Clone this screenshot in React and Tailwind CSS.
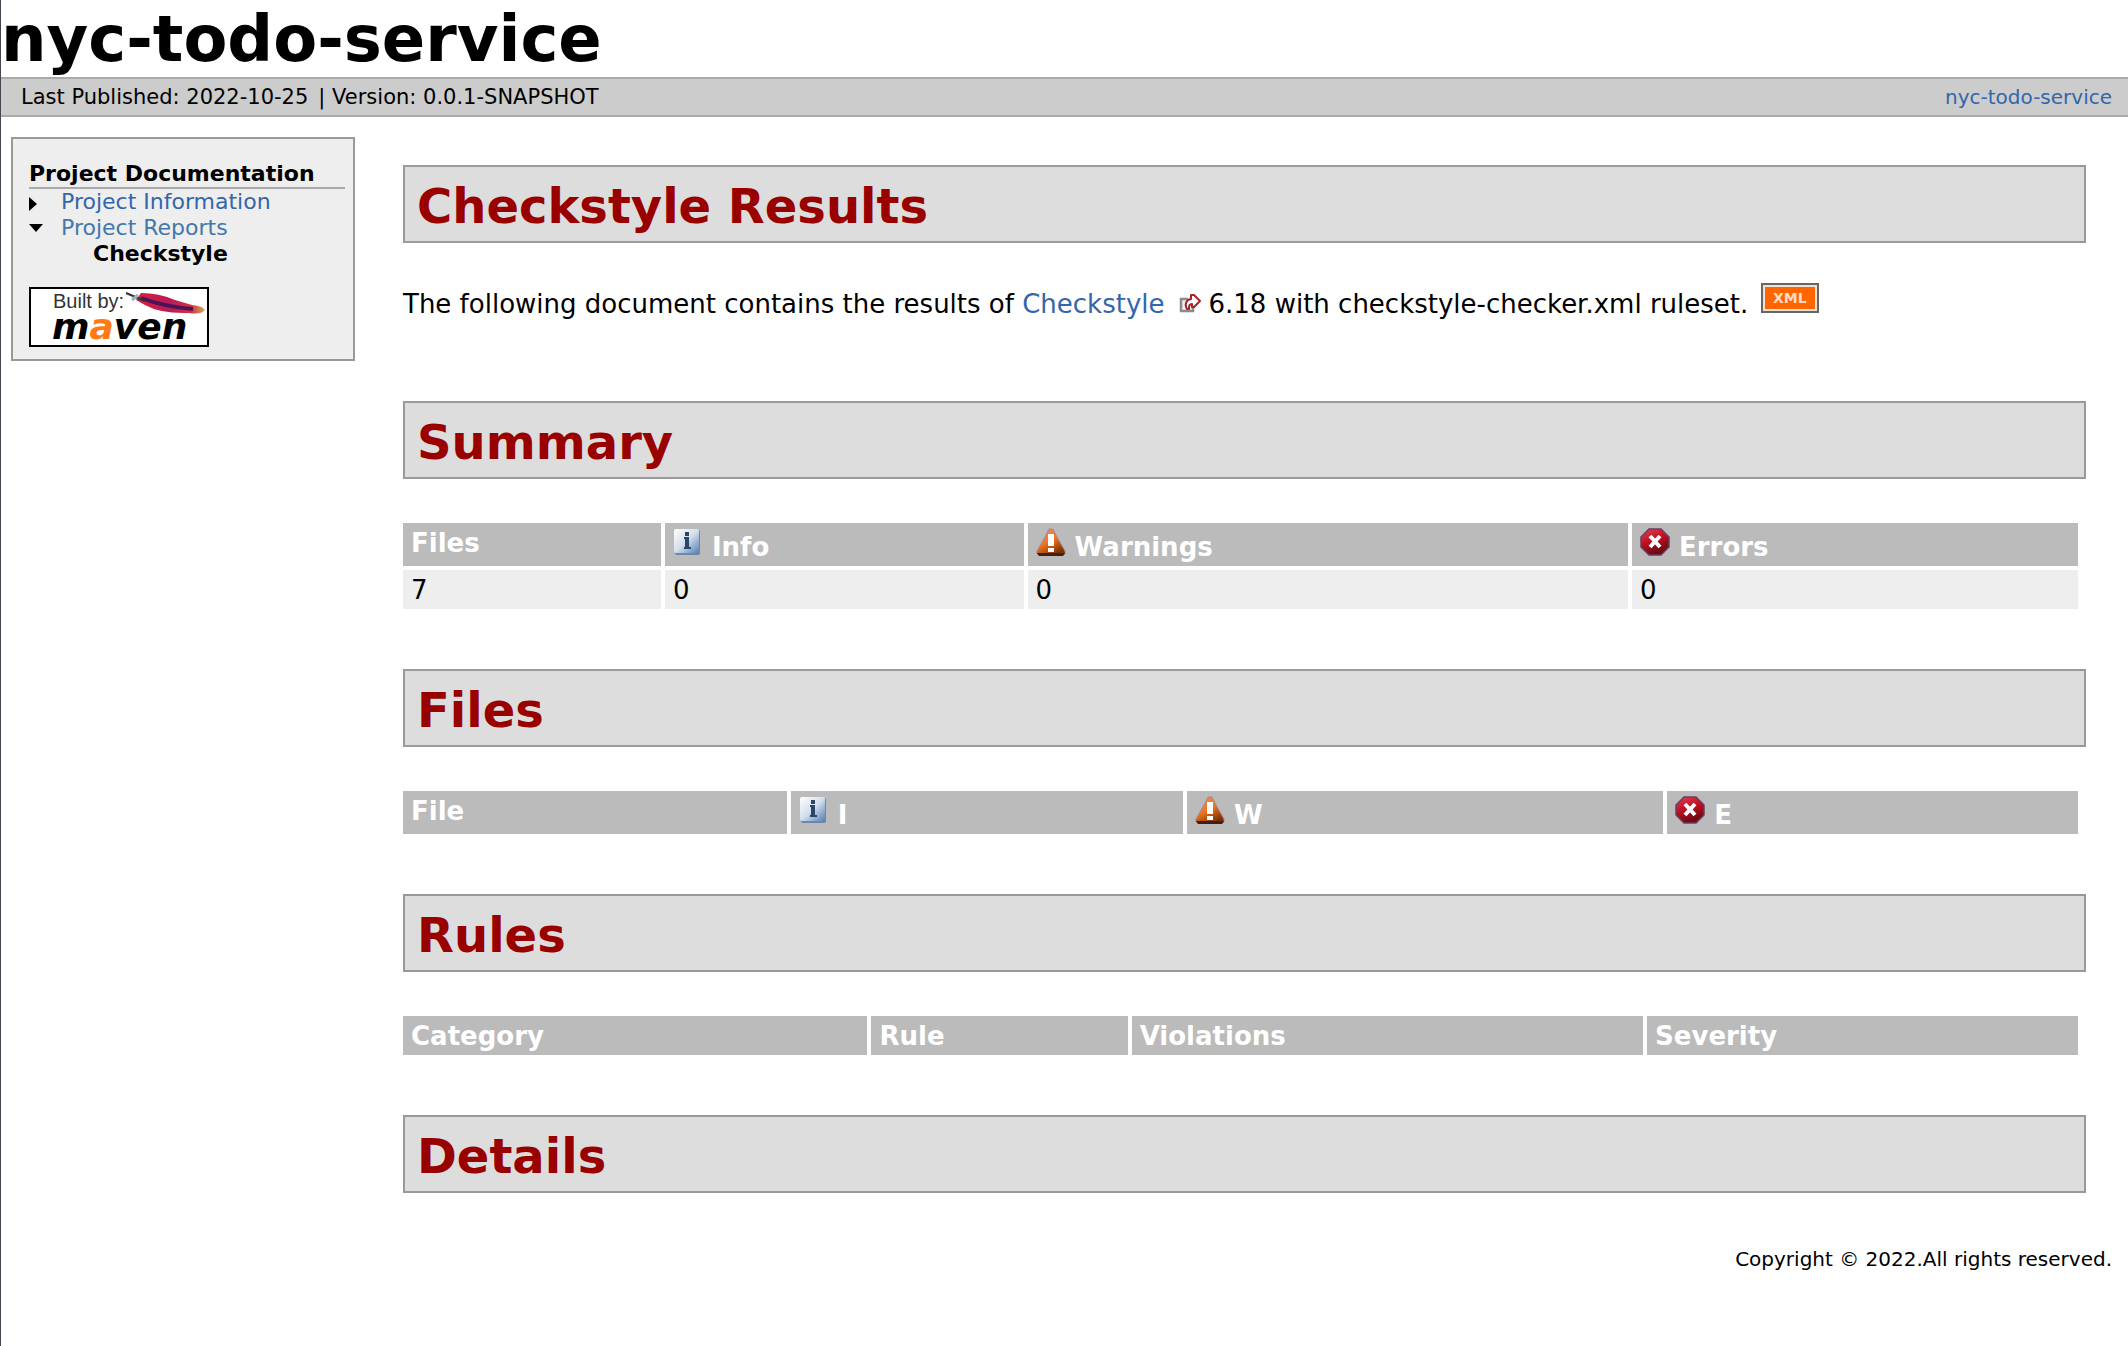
import React from "react";

function InfoIcon() {
  return (
    <svg className="mr-[9px] inline-block align-baseline" width="30" height="28" viewBox="0 0 30 28" aria-hidden="true">
      <defs>
        <linearGradient id="infoFill" x1="0" y1="0" x2="1" y2="1">
          <stop offset="0" stopColor="#ffffff" />
          <stop offset="0.5" stopColor="#d3dfec" />
          <stop offset="1" stopColor="#587fb4" />
        </linearGradient>
      </defs>
      <rect x="2" y="2" width="25" height="25" rx="2" fill="#6d86ab" />
      <rect x="1" y="1" width="25" height="24" rx="2" fill="url(#infoFill)" />
      <path d="M12 4h4v4h-4zM11 9h5v10h2v2h-7v-2h1v-8h-1z" fill="#2c4669" />
    </svg>
  );
}

function WarningIcon() {
  return (
    <svg className="mr-[9px] inline-block align-baseline" width="30" height="28" viewBox="0 0 30 28" aria-hidden="true">
      <defs>
        <linearGradient id="warnFill" x1="0" y1="0" x2="0.6" y2="1">
          <stop offset="0" stopColor="#ee8f6a" />
          <stop offset="0.55" stopColor="#ee7420" />
          <stop offset="1" stopColor="#7c3204" />
        </linearGradient>
      </defs>
      <path d="M13 1h4l4 8 8 14q1 4-3 4H4q-4 0-3-4L9 9z" fill="url(#warnFill)" stroke="#a58a92" strokeWidth="1" />
      <path d="M1 25h28l-2 3H3z" fill="#402015" />
      <path d="M12 6h6v12h-6zM12 20h6v4h-6z" fill="#fff" />
    </svg>
  );
}

function ErrorIcon() {
  return (
    <svg className="mr-[9px] inline-block align-baseline" width="30" height="28" viewBox="0 0 30 28" aria-hidden="true">
      <defs>
        <linearGradient id="errFill" x1="0" y1="0" x2="0.4" y2="1">
          <stop offset="0" stopColor="#e0425e" />
          <stop offset="0.5" stopColor="#c2101f" />
          <stop offset="1" stopColor="#6a0a12" />
        </linearGradient>
      </defs>
      <path d="M9 1h12l8 8v10l-8 8H9l-8-8V9z" fill="url(#errFill)" stroke="#6d3d62" strokeWidth="1.5" />
      <path d="M10 8l10 11M20 8L10 19" stroke="#fff" strokeWidth="4" />
    </svg>
  );
}

function ExternalIcon() {
  return (
    <svg className="ml-3.5 mr-2 inline-block align-baseline" width="22" height="20" viewBox="0 0 22 20" aria-hidden="true">
      <path d="M9 6H2v12h12v-4" fill="#eee" stroke="#8c8c8c" strokeWidth="2.5" />
      <path d="M12 2h3l6 6-6 6h-2v-3c-3 0-3 2-3 5H8c-2-3-2-9 4-10z" fill="#fff" stroke="#a8202a" strokeWidth="2" strokeLinejoin="round" />
    </svg>
  );
}

function MavenLogo() {
  return (
    <svg width="180" height="60" viewBox="0 0 180 60" role="img" aria-label="Built by Maven">
      <defs>
        <linearGradient id="feather" x1="0" y1="0" x2="1" y2="0">
          <stop offset="0" stopColor="#d8203c" />
          <stop offset="0.5" stopColor="#b81c58" />
          <stop offset="0.8" stopColor="#d83038" />
          <stop offset="1" stopColor="#c9b35c" />
        </linearGradient>
      </defs>
      <rect x="1" y="1" width="178" height="58" fill="#fff" stroke="#000" strokeWidth="2" />
      <text x="24" y="21" fontFamily="Liberation Sans, sans-serif" fontSize="20" fill="#333">Built by:</text>
      <path d="M107 13 L112 6 Q130 6 146 13 L163 18 Q174 19 176 23 Q172 28 160 26 Q132 27 116 18Z" fill="url(#feather)" />
      <path d="M112 11 Q136 20 164 22" fill="none" stroke="#4a1458" strokeWidth="4" />
      <path d="M97 6L116 14" stroke="#333" strokeWidth="2" />
      <path d="M103 13l6-5" stroke="#9fb0b8" strokeWidth="3" />
      <text x="23" y="52" fontFamily="DejaVu Sans, sans-serif" fontSize="36" fontWeight="bold" fontStyle="italic">
        m<tspan fill="#ff7a14">a</tspan>ven
      </text>
    </svg>
  );
}

function Heading({ children }) {
  return (
    <h2 className="border-2 border-[#999] bg-[#ddd] px-3 pt-1.5 pb-0.5 text-5xl leading-[66px] font-bold text-[#900]">
      {children}
    </h2>
  );
}

function Th({ icon, children }) {
  return (
    <th className="border-r-4 border-b-4 border-white bg-[#bbb] bg-clip-padding px-2 pt-[5px] pb-[3px] text-left align-top leading-[31px] font-bold text-white">
      {icon}
      {children}
    </th>
  );
}

function Td({ children }) {
  return (
    <td className="border-r-4 border-b-4 border-white bg-[#eee] bg-clip-padding px-2 pt-[5px] pb-[3px] leading-[31px]">
      {children}
    </td>
  );
}

export default function App() {
  return (
    <div className="min-h-screen border-l border-[#46464e] bg-white font-['Verdana','DejaVu_Sans',sans-serif] text-[26px] text-black">
      <header>
        <h1 className="pt-0.5 text-[64px] leading-[75px] font-bold">nyc-todo-service</h1>
        <div className="flex justify-between border-y-2 border-[#aaa] bg-[#ccc] pr-4 pl-5 text-xl leading-9">
          <div className="flex gap-2.5 text-[21px]">
            <span>Last Published: 2022-10-25</span>
            <span>| Version: 0.0.1-SNAPSHOT</span>
          </div>
          <a href="#home" className="text-[#36a]">nyc-todo-service</a>
        </div>
      </header>

      <div className="flex items-start">
        <nav className="mt-5 ml-2.5 w-[344px] shrink-0 border-2 border-[#999] bg-[#eee] px-4 pt-[22px] pb-3 text-[22px] leading-[26px]">
          <h5 className="-mr-2 border-b-2 border-[#aaa] font-bold">Project Documentation</h5>
          <ul>
            <li className="flex items-center">
              <svg className="mr-6 mt-1" width="8" height="14" viewBox="0 0 8 14" aria-hidden="true"><path d="M0 0l8 7-8 7z" /></svg>
              <a href="#info" className="text-[#36a]">Project Information</a>
            </li>
            <li>
              <div className="flex items-center">
                <svg className="mr-4" width="16" height="8" viewBox="0 0 16 8" aria-hidden="true"><path d="M0 0h14l-7 8z" /></svg>
                <a href="#reports" className="text-[#47a]">Project Reports</a>
              </div>
              <ul className="pl-16"><li className="font-bold">Checkstyle</li></ul>
            </li>
          </ul>
          <a href="#maven" className="mt-5 block w-fit"><MavenLogo /></a>
        </nav>

        <main className="mt-12 mr-[42px] ml-12 flex-1">
          <section>
            <Heading>Checkstyle Results</Heading>
            <p className="mt-10 leading-10">
              The following document contains the results of{" "}
              <a href="#checkstyle" className="text-[#36a]">Checkstyle<ExternalIcon /></a>
              6.18 with checkstyle-checker.xml ruleset.{" "}
              <a href="#rss" aria-label="XML feed">
                <svg className="ml-1 inline-block align-baseline" width="58" height="30" viewBox="0 0 58 30" aria-hidden="true">
                  <rect width="58" height="30" fill="#666" />
                  <rect x="2" y="2" width="54" height="26" fill="#ede0d4" />
                  <rect x="4" y="4" width="50" height="22" fill="#f60" />
                  <text x="12" y="20" fontFamily="DejaVu Sans, sans-serif" fontSize="14" fontWeight="bold" fill="#ffdcc4">XML</text>
                </svg>
              </a>
            </p>
          </section>

          <section className="mt-[77px]">
            <Heading>Summary</Heading>
            <div className="mt-11 pr-1">
              <table className="w-full table-fixed border-separate border-spacing-0">
                <colgroup><col className="w-[15.6%]" /><col className="w-[21.6%]" /><col className="w-[36%]" /><col /></colgroup>
                <thead><tr><Th>Files</Th><Th icon={<InfoIcon />}>Info</Th><Th icon={<WarningIcon />}>Warnings</Th><Th icon={<ErrorIcon />}>Errors</Th></tr></thead>
                <tbody><tr><Td>7</Td><Td>0</Td><Td>0</Td><Td>0</Td></tr></tbody>
              </table>
            </div>
          </section>

          <section className="mt-14">
            <Heading>Files</Heading>
            <div className="mt-11 pr-1">
              <table className="w-full table-fixed border-separate border-spacing-0">
                <colgroup><col className="w-[23.1%]" /><col className="w-[23.6%]" /><col className="w-[28.6%]" /><col /></colgroup>
                <thead><tr><Th>File</Th><Th icon={<InfoIcon />}>I</Th><Th icon={<WarningIcon />}>W</Th><Th icon={<ErrorIcon />}>E</Th></tr></thead>
              </table>
            </div>
          </section>

          <section className="mt-14">
            <Heading>Rules</Heading>
            <div className="mt-11 pr-1">
              <table className="w-full table-fixed border-separate border-spacing-0">
                <colgroup><col className="w-[27.9%]" /><col className="w-[15.5%]" /><col className="w-[30.7%]" /><col /></colgroup>
                <thead><tr><Th>Category</Th><Th>Rule</Th><Th>Violations</Th><Th>Severity</Th></tr></thead>
              </table>
            </div>
          </section>

          <section className="mt-14">
            <Heading>Details</Heading>
          </section>
        </main>
      </div>

      <footer className="mt-12 pr-4 text-right text-xl leading-9">Copyright © 2022.All rights reserved.</footer>
    </div>
  );
}
